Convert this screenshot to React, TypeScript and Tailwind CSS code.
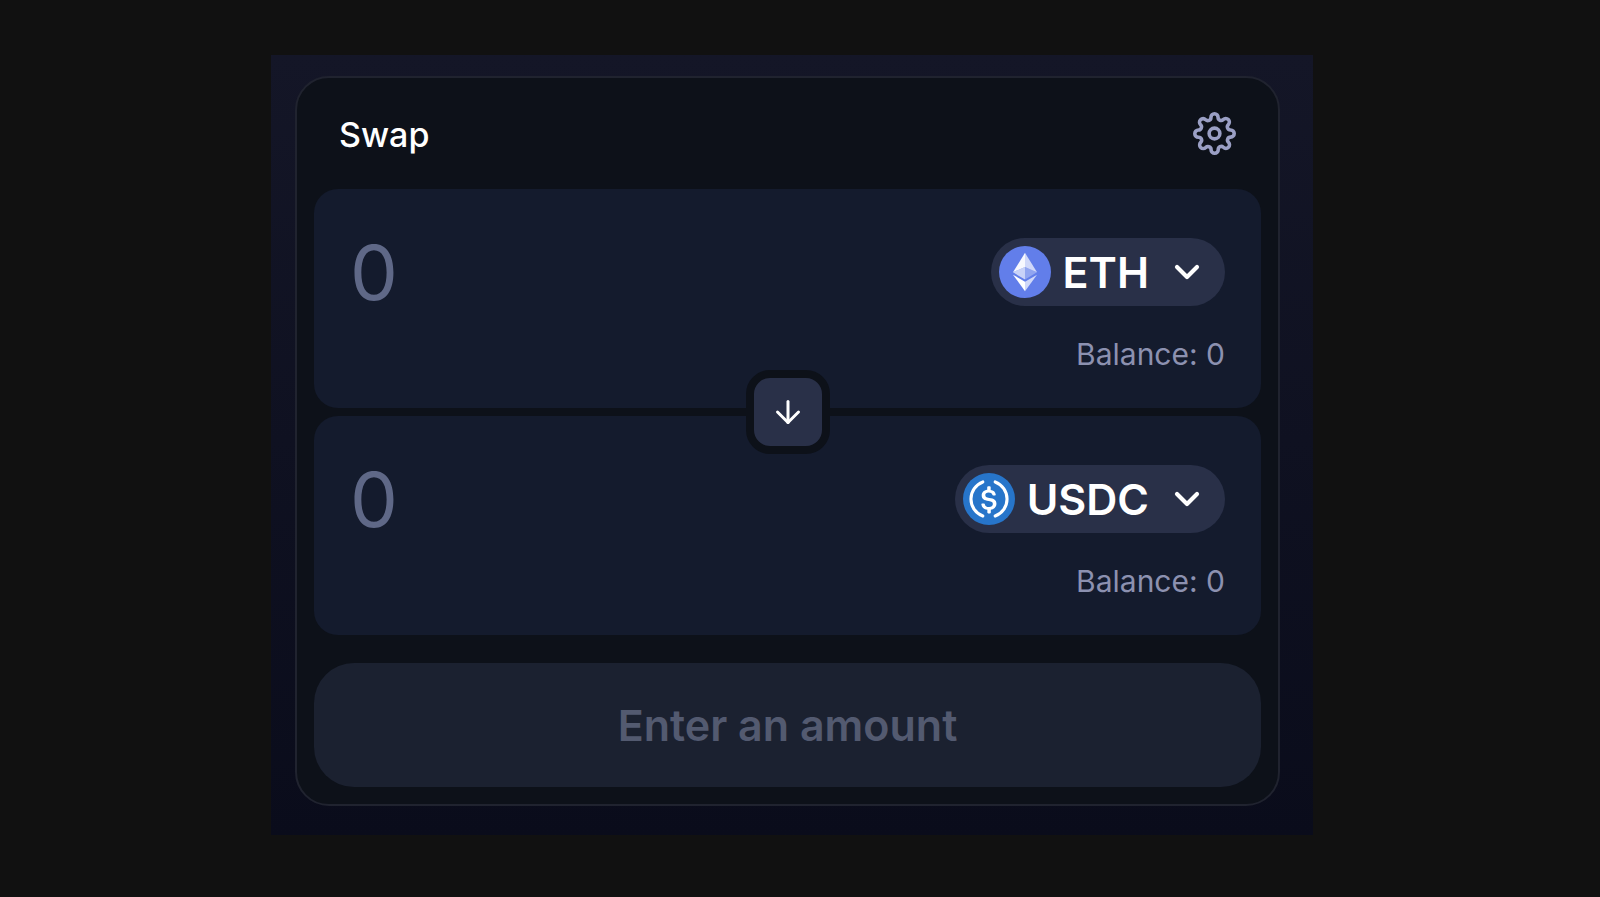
/**
 * @file App.tsx
 * @description Token swap card with two amount panels, a direction toggle and a submit button.
 */

import { useState } from "react";
import { FiArrowDown, FiChevronDown, FiSettings } from "react-icons/fi";

type Token = "ETH" | "USDC";

const EthIcon = () => (
  <svg viewBox="0 0 32 32" className="size-[52px] shrink-0" aria-hidden="true">
    <circle cx="16" cy="16" r="16" fill="#627eea" />
    <g fill="#fff">
      <path fillOpacity=".7" d="M16 4.2v8.67l7.4 3.35z" />
      <path fillOpacity=".95" d="M16 4.2L8.6 16.22l7.4-3.35z" />
      <path fillOpacity=".7" d="M16 21.97v5.83l7.4-10.18z" />
      <path d="M16 27.8v-5.83l-7.4-4.35z" />
      <path fillOpacity=".3" d="M16 20.57l7.4-4.35-7.4-3.35z" />
      <path fillOpacity=".65" d="M8.6 16.22l7.4 4.35v-7.7z" />
    </g>
  </svg>
);

const UsdcIcon = () => (
  <svg viewBox="0 0 32 32" className="size-[52px] shrink-0" aria-hidden="true">
    <circle cx="16" cy="16" r="16" fill="#2775ca" />
    {/* Side arcs */}
    <g fill="none" stroke="#fff" strokeWidth="1.9" strokeLinecap="round">
      <path d="M12.2 5.5a11.2 11.2 0 0 0 0 21" />
      <path d="M19.8 5.5a11.2 11.2 0 0 1 0 21" />
    </g>
    {/* Dollar sign */}
    <path
      fill="#fff"
      transform="translate(16 16) scale(1.14) translate(-16 -15.5)"
      d="M20.02 18.12c0-2.12-1.28-2.85-3.84-3.15-1.82-.25-2.19-.73-2.19-1.58s.61-1.4 1.82-1.4c1.1 0 1.71.37 2.01 1.28.06.18.24.3.43.3h.97a.42.42 0 0 0 .43-.42v-.06a3.04 3.04 0 0 0-2.74-2.49V9.14c0-.24-.18-.42-.48-.48h-.92c-.24 0-.42.18-.48.48v1.4c-1.83.24-2.98 1.45-2.98 2.97 0 2 1.21 2.79 3.77 3.1 1.71.3 2.26.66 2.26 1.63s-.85 1.64-2.01 1.64c-1.58 0-2.13-.67-2.31-1.58a.46.46 0 0 0-.43-.36h-1.03a.42.42 0 0 0-.43.42v.06c.25 1.52 1.22 2.61 3.23 2.92v1.46c0 .24.18.42.48.48h.91c.25 0 .43-.18.49-.48v-1.46c1.82-.3 3.04-1.58 3.04-3.22z"
    />
  </svg>
);

/**
 * @function TokenPanel
 * @description Amount input with a token selector and the wallet balance below it.
 */
const TokenPanel = ({ token, label }: { token: Token; label: string }) => {
  const [amount, setAmount] = useState("");

  return (
    <section className="rounded-3xl bg-[#141b2d] px-9 pb-[34px] pt-9">
      <div className="flex items-center justify-between gap-6">
        <input
          type="text"
          inputMode="decimal"
          aria-label={label}
          placeholder="0"
          value={amount}
          onChange={(e) => setAmount(e.target.value)}
          className="h-[94px] w-full min-w-0 flex-1 bg-transparent text-[76px] leading-[94px] text-white outline-none placeholder:text-[#5f6887]"
        />
        <button
          type="button"
          className="flex h-[68px] items-center rounded-full bg-[#293048] pl-2 pr-[18px] text-[43px] font-semibold text-white"
        >
          {token === "ETH" ? <EthIcon /> : <UsdcIcon />}
          <span className="ml-3 mr-[18px]">{token}</span>
          <FiChevronDown size={40} strokeWidth={2.5} aria-hidden="true" />
        </button>
      </div>
      <p className="mt-[15px] text-right text-[30px] leading-10 text-[#8c91b0]">Balance: 0</p>
    </section>
  );
};

const App = () => {
  return (
    <main className="min-h-screen bg-[#111111] pb-[63px] pr-4 pt-[55px] font-[Inter,sans-serif]">
      <div className="mx-auto max-w-[1042px] bg-linear-to-b from-[#141627] to-[#0a0c1b] pb-[29px] pl-6 pr-[33px] pt-[21px]">
        <div className="rounded-[34px] border-2 border-[#20232f] bg-[#0d1119] p-[17px]">
          {/* Header */}
          <header className="flex h-[94px] items-start justify-between px-[25px] pt-[17px]">
            <h1 className="text-[34px] font-medium leading-[46px] text-white">Swap</h1>
            <button type="button" aria-label="Settings" className="text-[#9a9fc4]">
              <FiSettings size={43} />
            </button>
          </header>

          {/* Token panels */}
          <div className="relative flex flex-col gap-2">
            <TokenPanel token="ETH" label="Sell amount" />
            <TokenPanel token="USDC" label="Buy amount" />
            <button
              type="button"
              aria-label="Switch tokens"
              className="absolute left-1/2 top-1/2 flex size-[84px] -translate-x-1/2 -translate-y-1/2 items-center justify-center rounded-3xl border-8 border-[#0d1119] bg-[#293048] text-white"
            >
              <FiArrowDown size={36} aria-hidden="true" />
            </button>
          </div>

          {/* Submit */}
          <button
            type="button"
            disabled
            className="mt-7 h-[124px] w-full rounded-[40px] bg-[#1b2130] text-[43px] font-semibold text-[#535a70]"
          >
            Enter an amount
          </button>
        </div>
      </div>
    </main>
  );
};

export default App;
